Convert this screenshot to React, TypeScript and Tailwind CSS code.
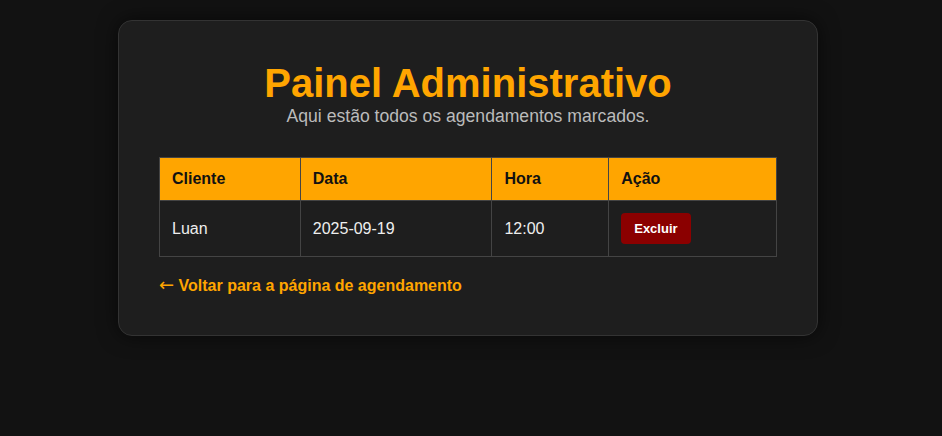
import React from 'react';

interface Agendamento {
    cliente: string;
    data: string;
    hora: string;
}

const agendamentos: Agendamento[] = [{ cliente: 'Luan', data: '2025-09-19', hora: '12:00' }];

/**
 * Painel administrativo com a lista de agendamentos
 */
const App: React.FC = () => {
    return (
        <div
            className="min-h-screen bg-[#121212] pt-[20px] text-[#eeeeee]"
            style={{ fontFamily: '"Liberation Sans", Arial, sans-serif' }}
        >
            <div className="ml-[118px] w-[700px] rounded-[14px] border border-[#333333] bg-[#1e1e1e] px-[40px] pt-[39px] pb-[41px] shadow-[0_0_20px_rgba(0,0,0,0.6)]">
                {/* Cabeçalho */}
                <div className="text-center">
                    <h1 className="text-[40px] leading-[46px] font-bold text-[#ffa500]">Painel Administrativo</h1>
                    <p className="text-[17.6px] leading-[20px] text-[#bbbbbb]">
                        Aqui estão todos os agendamentos marcados.
                    </p>
                </div>

                {/* Tabela */}
                <table className="mt-[31px] w-full border-collapse text-[16px] leading-[18px]">
                    <colgroup>
                        <col className="w-[141px]" />
                        <col className="w-[192px]" />
                        <col className="w-[117px]" />
                        <col className="w-[168px]" />
                    </colgroup>
                    <thead>
                        <tr className="bg-[#ffa500] text-left text-[#111111]">
                            <th className="border border-[#444444] px-[12px] py-[12px] font-bold">Cliente</th>
                            <th className="border border-[#444444] px-[12px] py-[12px] font-bold">Data</th>
                            <th className="border border-[#444444] px-[12px] py-[12px] font-bold">Hora</th>
                            <th className="border border-[#444444] px-[12px] py-[12px] font-bold">Ação</th>
                        </tr>
                    </thead>
                    <tbody>
                        {agendamentos.map((a, i) => (
                            <tr key={i}>
                                <td className="border border-[#444444] px-[12px] py-[12px]">{a.cliente}</td>
                                <td className="border border-[#444444] px-[12px] py-[12px]">{a.data}</td>
                                <td className="border border-[#444444] px-[12px] py-[12px]">{a.hora}</td>
                                <td className="border border-[#444444] px-[12px] py-[12px]">
                                    <button className="h-[31px] rounded-[4px] bg-[#8b0000] px-[13px] text-[13px] font-bold text-white">
                                        Excluir
                                    </button>
                                </td>
                            </tr>
                        ))}
                    </tbody>
                </table>

                {/* Link de volta */}
                <a href="#" className="mt-[19px] block h-[18px] text-[16px] leading-[18px] font-bold text-[#ffa500]">
                    <span
                        className="text-[18px] leading-none font-normal"
                        style={{ fontFamily: '"DejaVu Sans", sans-serif' }}
                    >
                        ←
                    </span>{' '}
                    Voltar para a página de agendamento
                </a>
            </div>
        </div>
    );
};

export default App;
